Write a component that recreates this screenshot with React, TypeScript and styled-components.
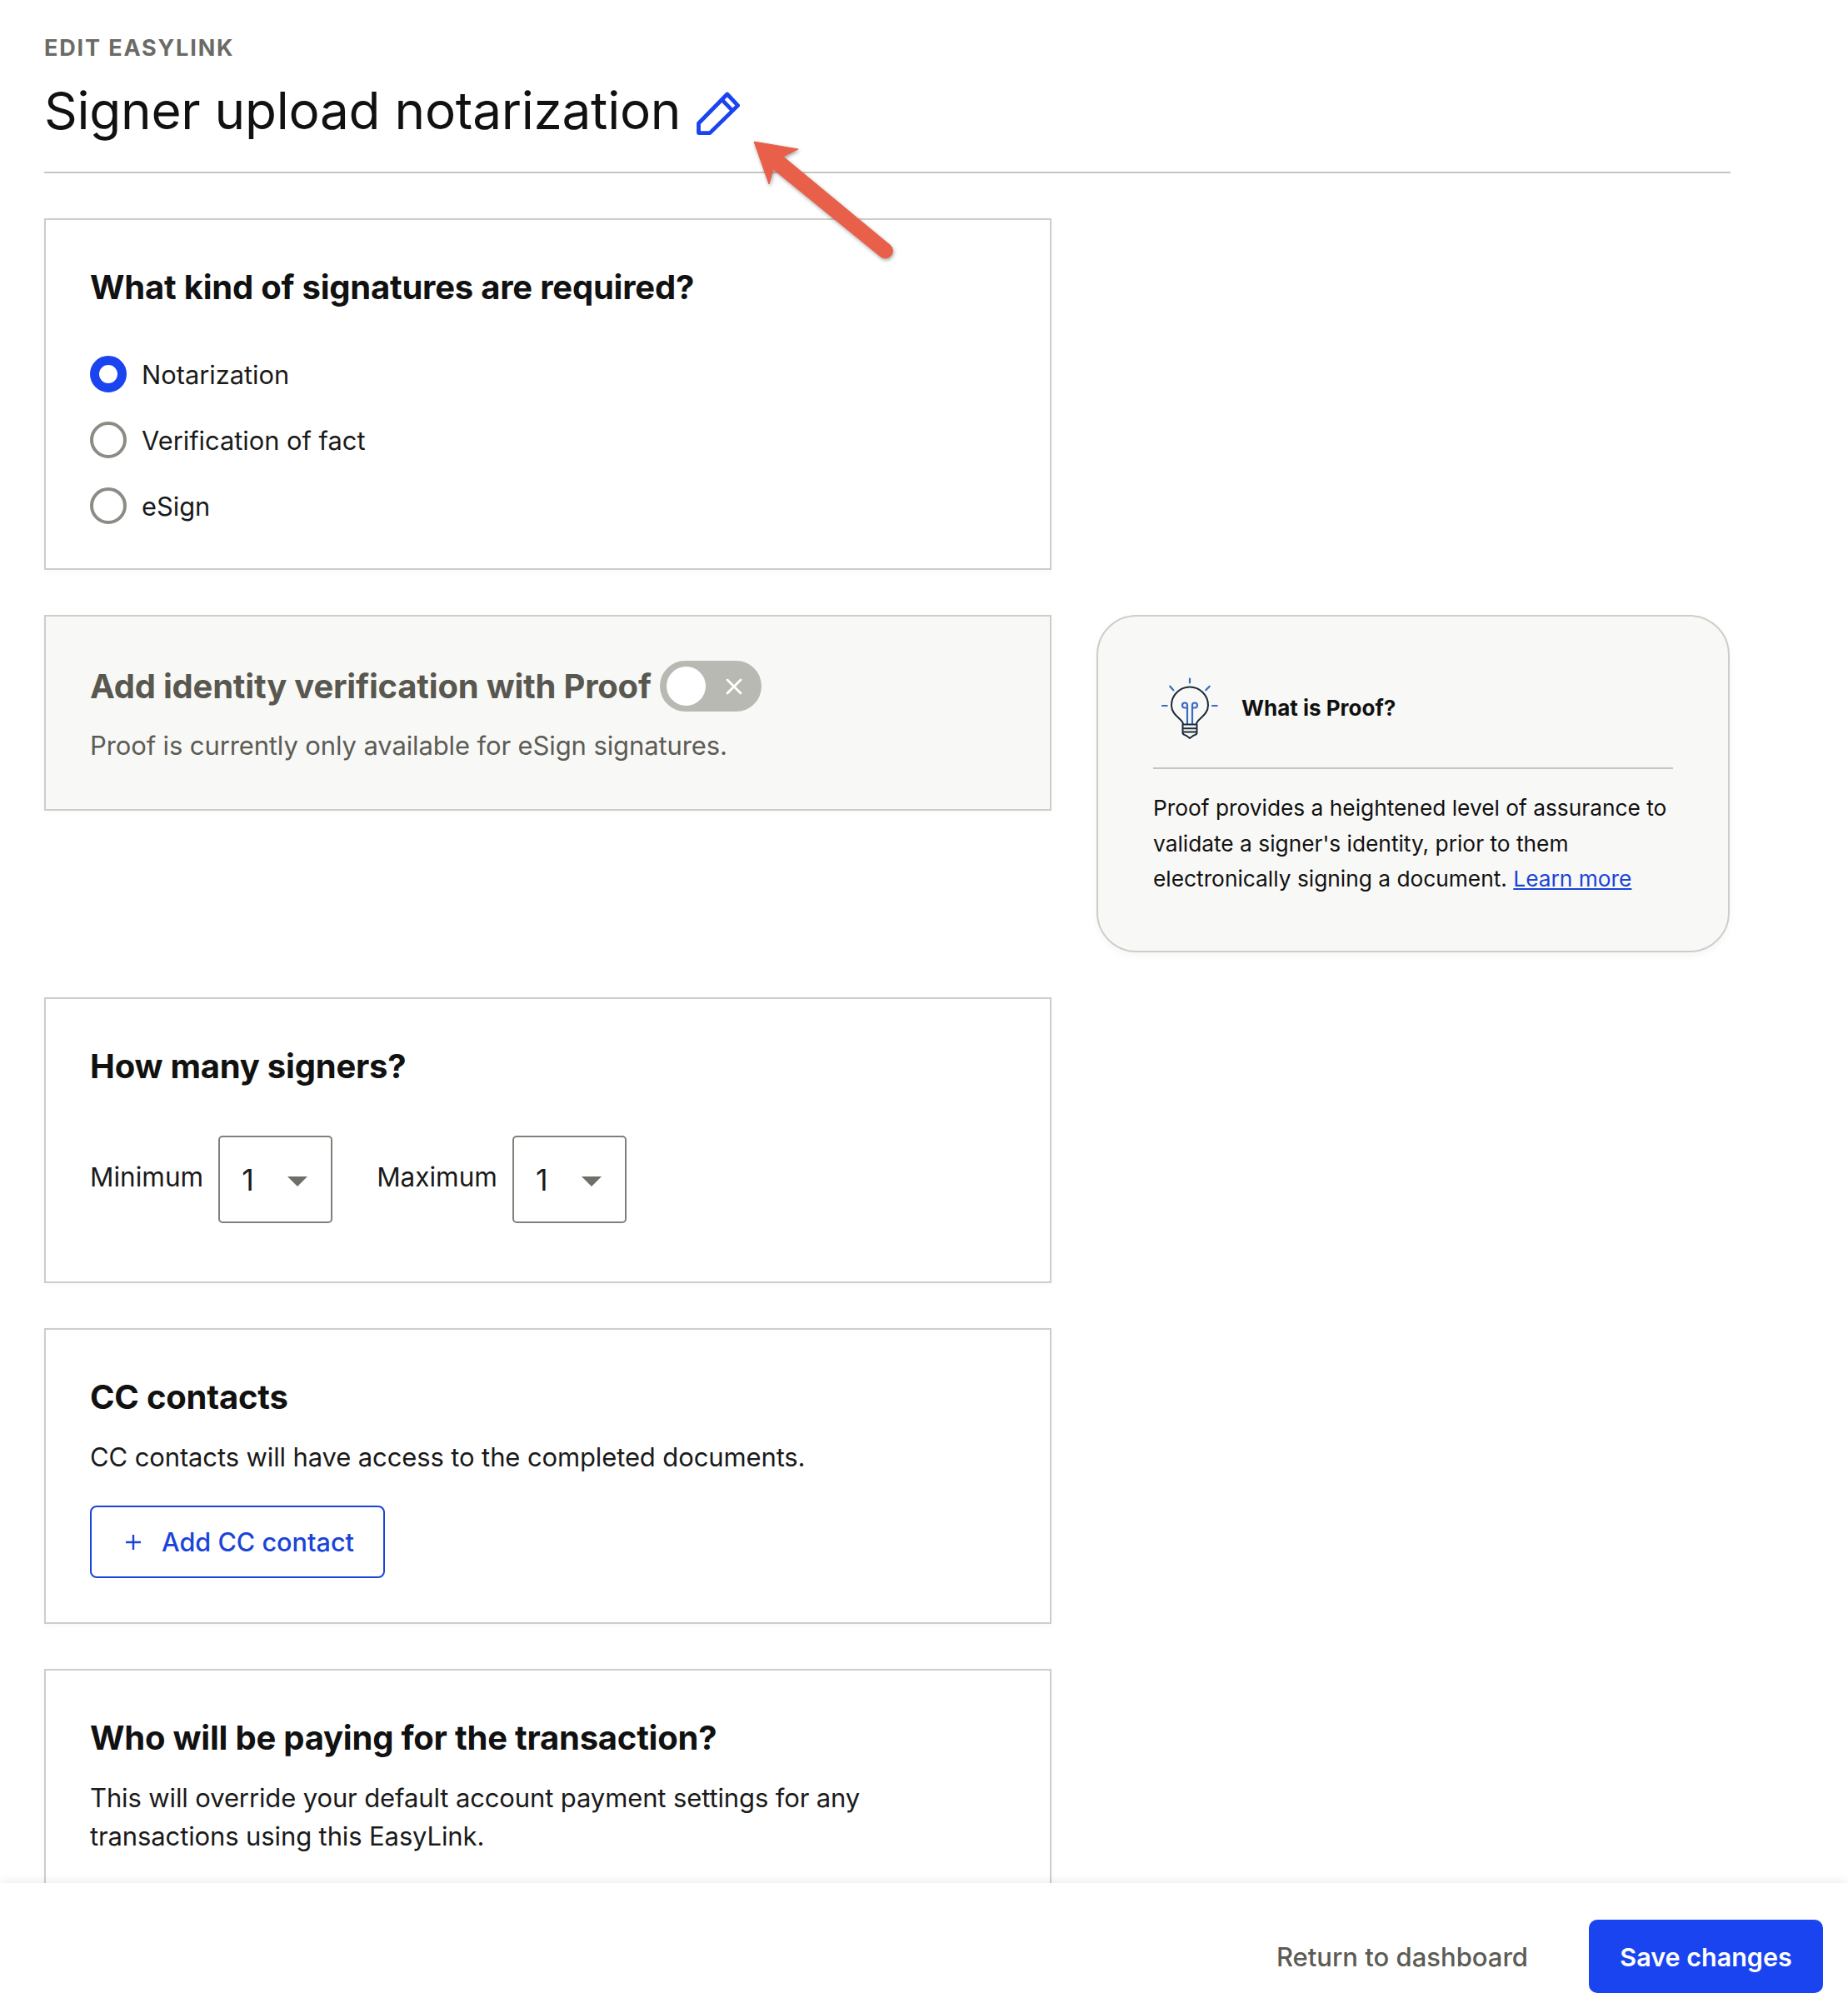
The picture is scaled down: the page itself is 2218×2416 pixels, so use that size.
import React from 'react';
import styled, {createGlobalStyle} from 'styled-components';

const GlobalStyle = createGlobalStyle`
	html, body {
		margin: 0;
		padding: 0;
		background: #fff;
		height: 100%;
		overflow: hidden;
		font-family: Inter, 'Liberation Sans', sans-serif;
		color: #111;
	}
`;

const Page = styled.div`
	position: relative;
	width: 2218px;
	height: 2416px;
	overflow: hidden;
	box-sizing: border-box;
	padding: 42px 141px 0 53px;
`;

const Eyebrow = styled.div`
	font-size: 27px;
	line-height: 32px;
	font-weight: 700;
	letter-spacing: 1.85px;
	color: #6b6b66;
`;

const TitleRow = styled.div`
	display: flex;
	align-items: center;
	gap: 19px;
	height: 86px;
	margin-top: 16px;
`;

const Title = styled.h1`
	margin: 0;
	font-size: 62px;
	line-height: 86px;
	font-weight: 400;
	letter-spacing: -0.25px;
	color: #111;
`;

const Divider = styled.hr`
	margin: 0;
	border: 0;
	height: 2px;
	background: #c6c6c1;
`;

const HeaderDivider = styled(Divider)`
	margin-top: 30px;
`;

const Layout = styled.div`
	display: grid;
	grid-template-columns: 1209px 760px;
	gap: 54px;
	margin-top: 54px;
	align-items: start;
`;

const Card = styled.section<{$muted?: boolean}>`
	grid-column: 1;
	box-sizing: border-box;
	padding: 53px;
	border: 2px solid #cdcdc9;
	background: ${props => (props.$muted ? '#f8f8f6' : '#fff')};
	box-shadow: 0 2px 8px rgba(0, 0, 0, 0.03);
`;

const CardTitle = styled.h2<{$muted?: boolean}>`
	margin: 0;
	font-size: 40px;
	line-height: 56px;
	font-weight: 700;
	letter-spacing: -0.22px;
	color: ${props => (props.$muted ? '#585850' : '#111')};
`;

const BodyText = styled.p<{$muted?: boolean}>`
	margin: 0;
	font-size: 31px;
	line-height: 46px;
	letter-spacing: -0.12px;
	color: ${props => (props.$muted ? '#5c5c55' : '#1a1a1a')};
`;

const RadioGroup = styled.div`
	display: flex;
	flex-direction: column;
	gap: 35px;
	margin-top: 54px;
`;

const RadioRow = styled.label`
	display: flex;
	align-items: center;
	gap: 18px;
	height: 44px;
	font-size: 30.8px;
	color: #1a1a1a;
`;

const RadioDot = styled.span<{$checked?: boolean}>`
	box-sizing: border-box;
	width: 44px;
	height: 44px;
	border-radius: 50%;
	border: ${props => (props.$checked ? '11px solid #1a44f0' : '4px solid #8c8c87')};
	background: #fff;
`;

const ToggleRow = styled.div`
	display: flex;
	align-items: center;
	gap: 10px;
	height: 61px;
`;

const Toggle = styled.span`
	display: flex;
	align-items: center;
	justify-content: space-between;
	box-sizing: border-box;
	width: 122px;
	height: 61px;
	padding: 0 23px 0 8px;
	border-radius: 31px;
	background: #b9b9b3;
`;

const ToggleKnob = styled.span`
	width: 47px;
	height: 47px;
	border-radius: 50%;
	background: #fff;
`;

const ProofNote = styled(BodyText)`
	margin-top: 18px;
`;

const Aside = styled.aside`
	grid-column: 2;
	grid-row: 2;
	box-sizing: border-box;
	height: 405px;
	padding: 66px 66px 0;
	border: 2px solid #cdcdc9;
	border-radius: 48px;
	background: #f8f8f6;
	box-shadow: 0 4px 10px rgba(0, 0, 0, 0.04);
`;

const AsideHeader = styled.div`
	display: flex;
	align-items: center;
	gap: 18px;
	height: 88px;
`;

const AsideTitle = styled.h3`
	margin: 0;
	font-size: 26px;
	line-height: 36px;
	font-weight: 700;
	color: #111;
`;

const AsideDivider = styled(Divider)`
	margin-top: 27px;
`;

const AsideText = styled.p`
	margin: 26px 0 0;
	font-size: 26.3px;
	line-height: 42.5px;
	color: #111;
`;

const LearnLink = styled.a`
	color: #1a44d8;
	text-decoration: underline;
`;

const SelectRow = styled.div`
	display: flex;
	align-items: center;
	margin-top: 55px;
	margin-bottom: 17px;
`;

const FieldLabel = styled.span`
	font-size: 31.5px;
	line-height: 46px;
	color: #1a1a1a;
	margin-right: 18px;
	position: relative;
	top: -3px;
`;

const Select = styled.div`
	display: flex;
	align-items: center;
	justify-content: space-between;
	box-sizing: border-box;
	width: 137px;
	height: 105px;
	padding: 0 28px 0 26px;
	margin-right: 53px;
	border: 2px solid #80807b;
	border-radius: 5px;
	font-size: 36px;
	color: #1a1a1a;
`;

const Caret = styled.span`
	width: 0;
	height: 0;
	margin-top: 5px;
	border-left: 12px solid transparent;
	border-right: 12px solid transparent;
	border-top: 12px solid #6f6f6a;
`;

const ContactsNote = styled(BodyText)`
	margin-top: 21px;
`;

const OutlineButton = styled.button`
	display: flex;
	align-items: center;
	gap: 24px;
	box-sizing: border-box;
	width: 354px;
	height: 87px;
	margin-top: 35px;
	padding: 0 0 0 40px;
	border: 2px solid #1a44d8;
	border-radius: 8px;
	background: #fff;
	color: #1a44d8;
	font-family: inherit;
	font-size: 30.6px;
	font-weight: 500;
`;

const PayingNote = styled(BodyText)`
	margin-top: 21px;
`;

const Footer = styled.footer`
	position: absolute;
	left: 0;
	right: 0;
	bottom: 0;
	display: flex;
	align-items: center;
	justify-content: flex-end;
	gap: 73px;
	box-sizing: border-box;
	height: 156px;
	padding: 20px 30px 0 0;
	background: #fff;
	box-shadow: 0 -3px 10px rgba(0, 0, 0, 0.07);
`;

const FooterLink = styled.a`
	font-size: 31px;
	font-weight: 500;
	color: #5c5c55;
`;

const SaveButton = styled.button`
	width: 281px;
	height: 88px;
	border: 0;
	border-radius: 10px;
	background: #1a44f0;
	color: #fff;
	font-family: inherit;
	font-size: 30.5px;
	font-weight: 600;
`;

const ArrowMark = styled.svg`
	position: absolute;
	left: 890px;
	top: 155px;
	overflow: visible;
	filter: drop-shadow(1px 2px 2px rgba(0, 0, 0, 0.35));
`;

const PencilSvg = styled.svg`
	margin-top: 6px;
`;

const PencilIcon = () => (
	<PencilSvg width="52" height="52" viewBox="0 0 52 52" fill="none" stroke="#1a44f0" strokeWidth="4.8" strokeLinejoin="round">
		<path d="M2.5 38 L36.8 3 L49.6 16.6 L16 49.6 L2.5 49.6 Z" />
		<path d="M30.4 9.6 L43 22.6" />
	</PencilSvg>
);

const BulbIcon = () => (
	<svg width="88" height="88" viewBox="0 0 88 88" fill="none" strokeWidth="2" strokeLinecap="round" strokeLinejoin="round">
		<g stroke="#3a6bc0" strokeWidth="2.2">
			<path d="M44 8.5V13.5M20.3 17.7L24.3 22.3M67.7 17.7L63.3 22.3M11 41H16.7M71 41H76.7" />
			<path d="M41 63V43.5M47 63V43.5" />
			<path d="M41 43.5H37.8A3 3 0 1 1 41 40.5V43.5M47 43.5H50.2A3 3 0 1 0 47 40.5V43.5" />
		</g>
		<g stroke="#1c2a3a">
			<path d="M36 63C36 57 22 53 22 40.5A22 22 0 1 1 66 40.5C66 53 52 57 52 63" />
			<path d="M35.5 63.5H52.5V73.5C52.5 76 50 76 48 77L44 80L40 77C38 76 35.5 76 35.5 73.5Z" />
			<path d="M36 68.2H52M36 72.6H52" />
		</g>
	</svg>
);

const App = () => (
	<>
		<GlobalStyle />
		<Page>
			<Eyebrow>EDIT EASYLINK</Eyebrow>
			<TitleRow>
				<Title>Signer upload notarization</Title>
				<PencilIcon />
			</TitleRow>
			<HeaderDivider />
			<Layout>
				<Card>
					<CardTitle>What kind of signatures are required?</CardTitle>
					<RadioGroup>
						<RadioRow>
							<RadioDot $checked />
							Notarization
						</RadioRow>
						<RadioRow>
							<RadioDot />
							Verification of fact
						</RadioRow>
						<RadioRow>
							<RadioDot />
							eSign
						</RadioRow>
					</RadioGroup>
				</Card>
				<Card $muted>
					<ToggleRow>
						<CardTitle $muted>Add identity verification with Proof</CardTitle>
						<Toggle>
							<ToggleKnob />
							<svg width="20" height="20" viewBox="0 0 20 20" stroke="#fff" strokeWidth="2.8" strokeLinecap="round">
								<path d="M2 2L18 18M18 2L2 18" />
							</svg>
						</Toggle>
					</ToggleRow>
					<ProofNote $muted>Proof is currently only available for eSign signatures.</ProofNote>
				</Card>
				<Aside>
					<AsideHeader>
						<BulbIcon />
						<AsideTitle>What is Proof?</AsideTitle>
					</AsideHeader>
					<AsideDivider />
					<AsideText>
						Proof provides a heightened level of assurance to validate a signer's identity, prior to them
						electronically signing a document. <LearnLink>Learn more</LearnLink>
					</AsideText>
				</Aside>
				<Card>
					<CardTitle>How many signers?</CardTitle>
					<SelectRow>
						<FieldLabel>Minimum</FieldLabel>
						<Select>
							1
							<Caret />
						</Select>
						<FieldLabel>Maximum</FieldLabel>
						<Select>
							1
							<Caret />
						</Select>
					</SelectRow>
				</Card>
				<Card>
					<CardTitle>CC contacts</CardTitle>
					<ContactsNote>CC contacts will have access to the completed documents.</ContactsNote>
					<OutlineButton>
						<svg width="20" height="20" viewBox="0 0 20 20" stroke="#1a44d8" strokeWidth="2.4">
							<path d="M10 1V19M1 10H19" />
						</svg>
						Add CC contact
					</OutlineButton>
				</Card>
				<Card>
					<CardTitle>Who will be paying for the transaction?</CardTitle>
					<PayingNote>
						This will override your default account payment settings for any
						<br />
						transactions using this EasyLink.
					</PayingNote>
				</Card>
			</Layout>
			<ArrowMark width="190" height="160" viewBox="0 0 190 160" fill="none">
				<path
					d="M15 15 L68 24 L50 33 L178 139 A8.5 8.5 0 0 1 167 153 L38 48 L33 66 Z"
					fill="#e8604a"
					stroke="#e8604a"
					strokeWidth="1"
					strokeLinejoin="round"
				/>
			</ArrowMark>
			<Footer>
				<FooterLink>Return to dashboard</FooterLink>
				<SaveButton>Save changes</SaveButton>
			</Footer>
		</Page>
	</>
);

export default App;
